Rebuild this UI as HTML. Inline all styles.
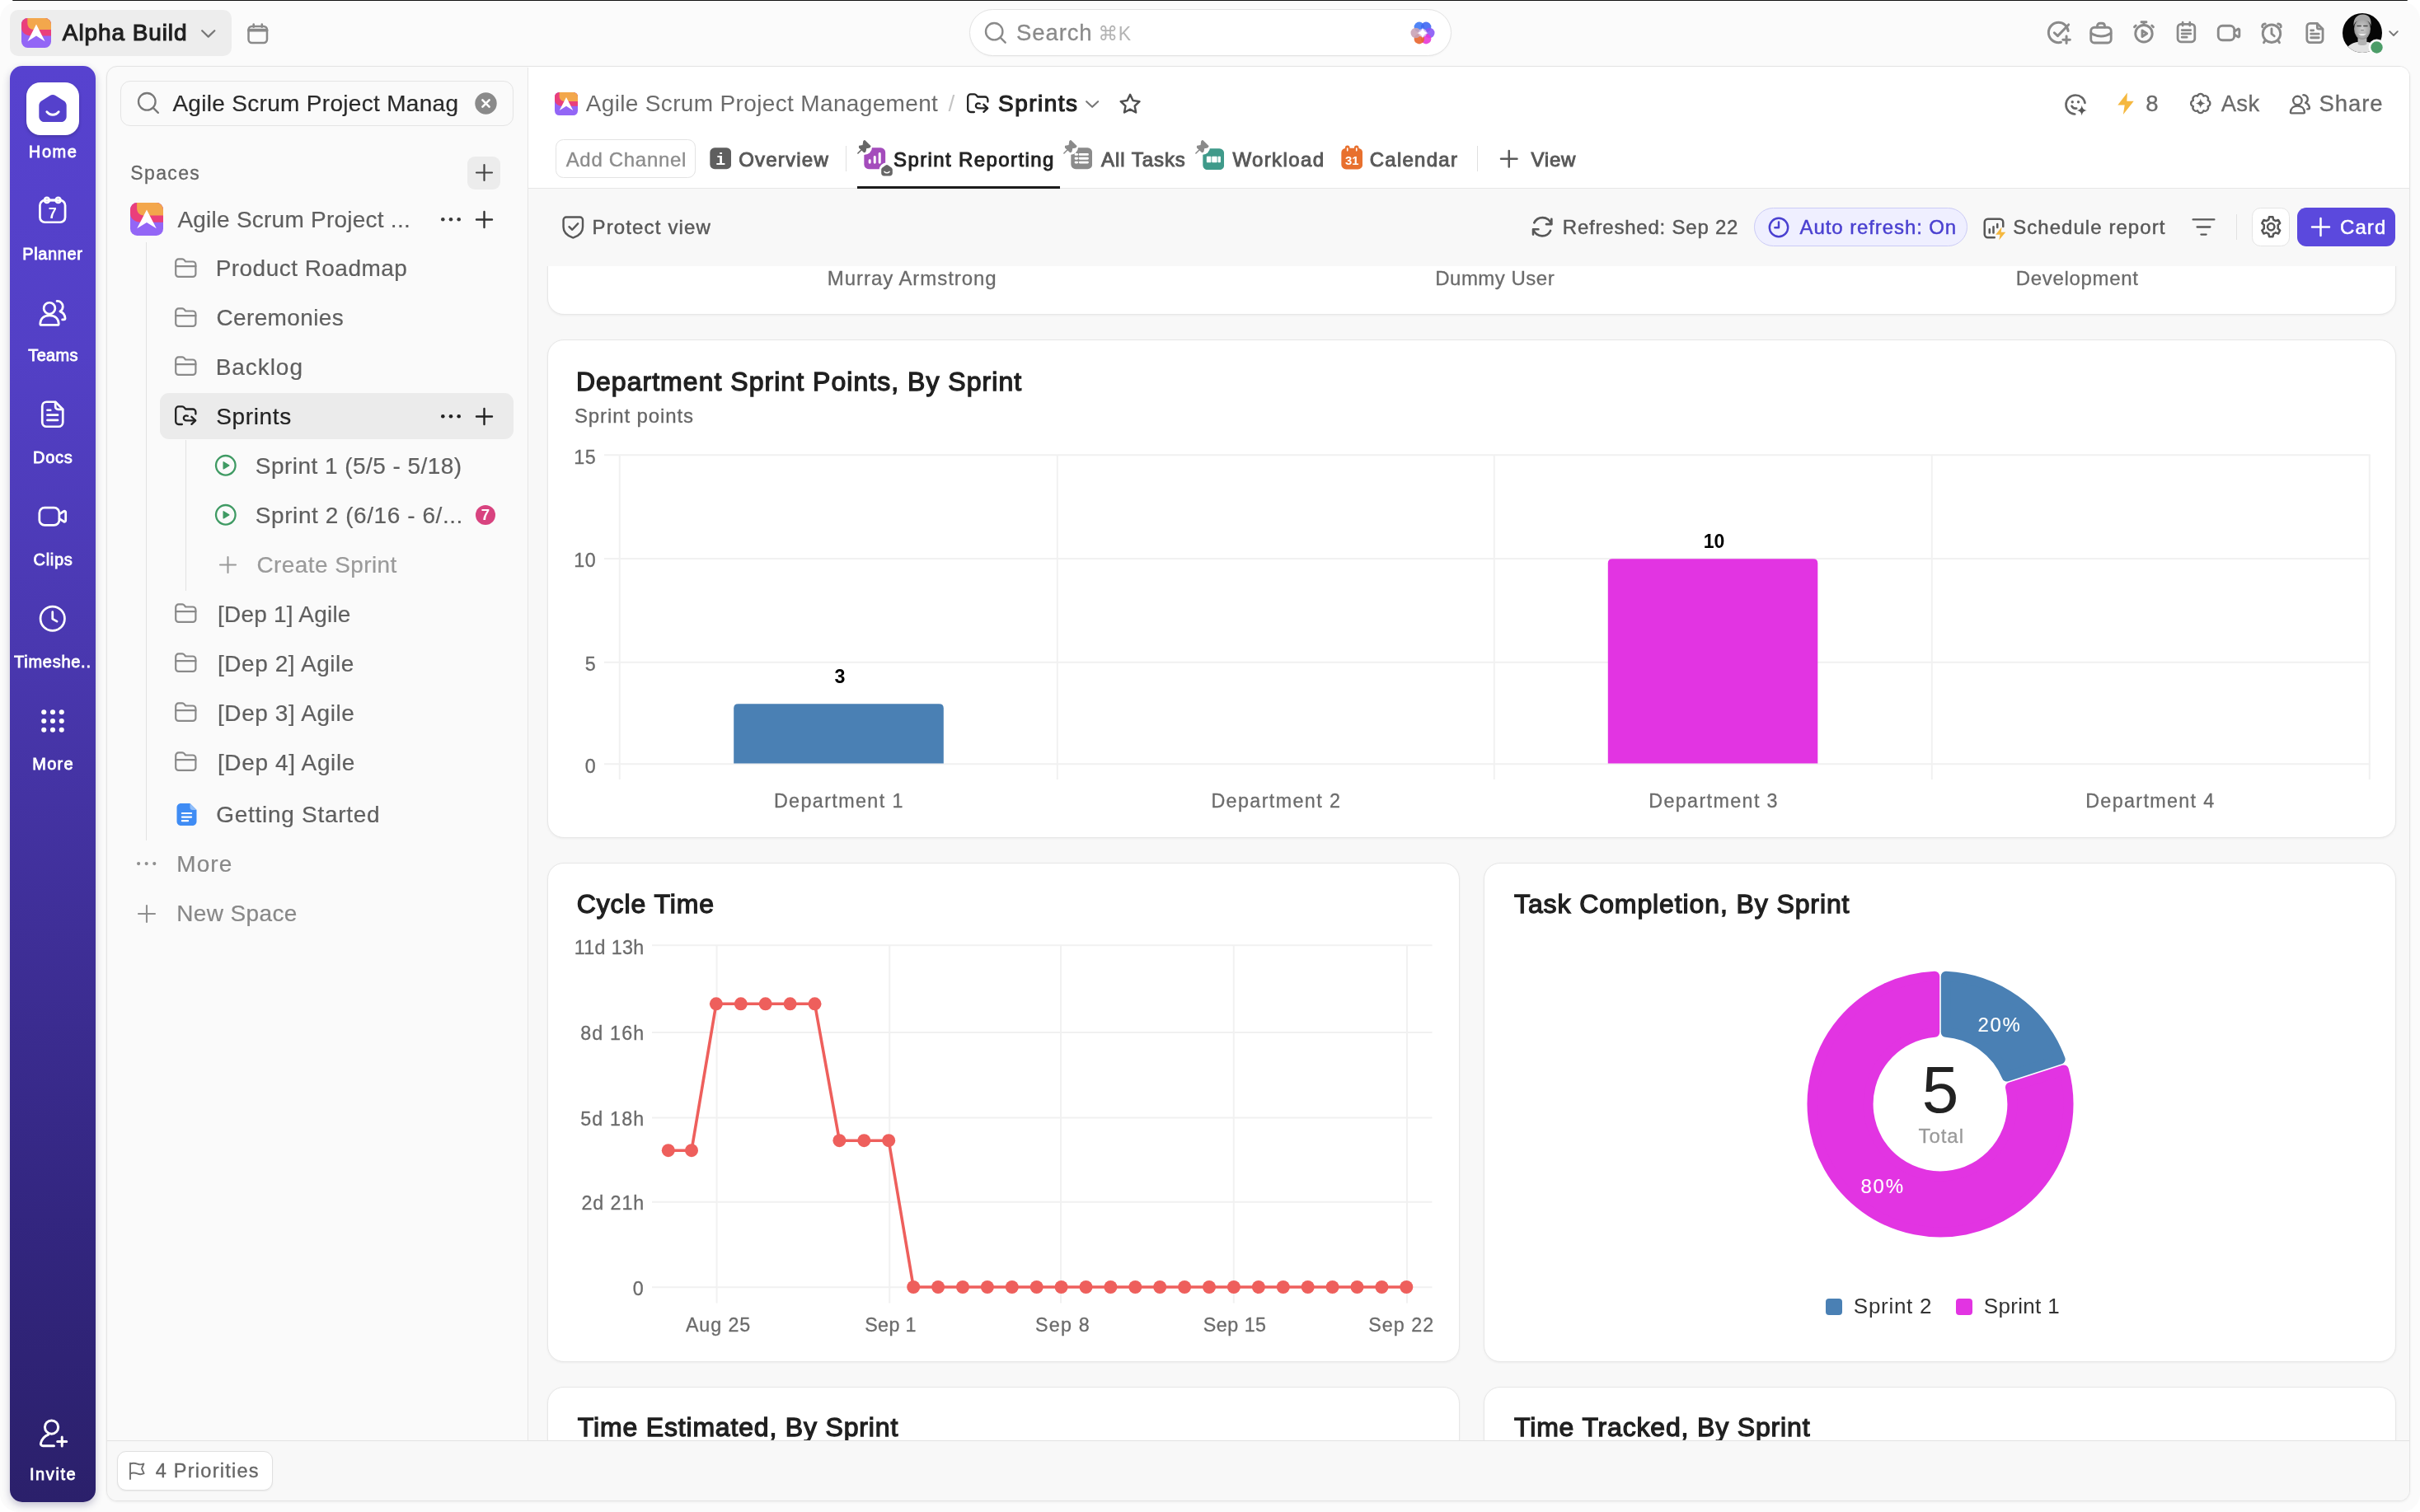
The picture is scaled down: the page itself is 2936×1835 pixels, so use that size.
<!DOCTYPE html>
<html lang="en"><head><meta charset="utf-8"><title>Sprints - Sprint Reporting</title><style>html,body{margin:0;padding:0;overflow:hidden}
body{width:2936px;height:1835px;position:relative;overflow:hidden;background:#fff;font-family:"Liberation Sans",sans-serif;}
#app{position:absolute;left:0;top:0;width:2936px;height:1835px;overflow:hidden;will-change:transform;}
.t{position:absolute;white-space:nowrap;line-height:1;}
.b{position:absolute;display:block;}
</style></head><body>
<div id="app">
<div class="b" style="left:0.00px;top:2.00px;width:2936.00px;height:1833.00px;background:#fbfbfb;border-radius:22px;"></div>
<div class="b" style="left:15.00px;top:0.00px;width:2906.00px;height:1.10px;background:#111;border-radius:0 0 1px 1px;"></div>
<div class="b" style="left:12.00px;top:12.00px;width:268.50px;height:55.50px;background:#ededed;border-radius:10px;"></div>
<svg class="b" style="left:26.00px;top:22.00px;" width="36.00" height="36.00" viewBox="0 0 36 36" fill="none"><defs><clipPath id="lg1"><rect x="0" y="0" width="36" height="36" rx="7.5"/></clipPath></defs>
<g clip-path="url(#lg1)"><rect width="36" height="36" fill="#9366f6"/>
<path d="M0 0H36V21.4H12C5 21.4 0 17.5 0 11.5Z" fill="#ea3f7b"/>
<path d="M7.3 0H36V14H15.5C10.5 14 7.3 11 7.3 6Z" fill="#f3a74c"/>
<path d="M18 7.6L28.6 28.2L18 21.6L7.4 28.2Z" fill="#fff"/></g></svg>
<div class="t" style="left:75.86px;top:26.30px;font-size:28px;color:#1f1f1f;letter-spacing:0.902px;-webkit-text-stroke:1.12px #1f1f1f;">Alpha Build</div>
<svg class="b" style="left:244.00px;top:36.00px;" width="17.50" height="9.80" viewBox="0 0 17.5 9.8" fill="none"><path d="M1.2 1.2L8.75 8.60L16.30 1.2" stroke="#777" stroke-width="2.2" stroke-linecap="round" stroke-linejoin="round"/></svg>
<svg class="b" style="left:299.00px;top:26.50px;" width="27.50" height="27.50" viewBox="0 0 24 24" fill="none"><g stroke="#8a8a8a" stroke-width="2.2" stroke-linecap="round" stroke-linejoin="round" fill="none"><rect x="2.2" y="4.4" width="19.6" height="17.4" rx="3.6"/><path d="M2.6 8.4H21.4" stroke-width="3.4"/><path d="M7.6 2.2V5M16.4 2.2V5"/></g></svg>
<div class="b" style="left:1175.50px;top:11.00px;width:585.00px;height:57.00px;background:#fff;border-radius:28.5px;border:1.5px solid #e3e3e3;box-sizing:border-box;box-shadow:0 1px 2px rgba(0,0,0,.04);"></div>
<svg class="b" style="left:1193.80px;top:26.20px;" width="34.40" height="34.40" viewBox="0 0 34.4 34.4" fill="none"><circle cx="12.2" cy="12.2" r="10.2" stroke="#8a8a8a" stroke-width="2.4"/><path d="M19.71 19.71L25.71 25.71" stroke="#8a8a8a" stroke-width="2.4" stroke-linecap="round"/></svg>
<div class="t" style="left:1233.11px;top:26.22px;font-size:27.5px;color:#8a8a8a;letter-spacing:0.870px;-webkit-text-stroke:0.3px #8a8a8a;">Search</div>
<div class="t" style="left:1332.2px;top:29.13px;font-size:23px;color:#b4b4b4;"><span style="font-family:'DejaVu Sans','Liberation Sans',sans-serif;font-size:24px;letter-spacing:0.6px;">⌘</span>K</div>
<svg class="b" style="left:1710.80px;top:24.60px;" width="30.00" height="30.00" viewBox="0 0 30 30" fill="none"><circle cx="10.85" cy="7.81" r="6.2" fill="#3d78f5" fill-opacity="0.9"/><circle cx="19.15" cy="7.81" r="6.2" fill="#4068f2" fill-opacity="0.9"/><circle cx="23.30" cy="15.00" r="6.2" fill="#8758f5" fill-opacity="0.9"/><circle cx="19.15" cy="22.19" r="6.2" fill="#e53ad6" fill-opacity="0.9"/><circle cx="10.85" cy="22.19" r="6.2" fill="#e8652e" fill-opacity="0.9"/><circle cx="6.70" cy="15.00" r="6.2" fill="#c9a3b6" fill-opacity="0.9"/><circle cx="15" cy="15" r="5" fill="#d9c4f2" fill-opacity="0.9"/><path d="M15 8.2C15.9 12.4 17.6 14.1 21.8 15C17.6 15.9 15.9 17.6 15 21.8C14.1 17.6 12.4 15.9 8.2 15C12.4 14.1 14.1 12.4 15 8.2Z" fill="#fff"/></svg>
<svg class="b" style="left:2482.49px;top:24.48px;" width="31.03" height="31.03" viewBox="0 0 24 24" fill="none"><g stroke="#8a8a8a" stroke-width="2.3" stroke-linecap="round" stroke-linejoin="round" fill="none"><path d="M21 10.5C20.3 5.8 16.5 2.6 12 2.6C6.8 2.6 2.6 6.8 2.6 12S6.8 21.4 12 21.4C12.8 21.4 13.6 21.3 14.3 21.1"/><path d="M8 12.2L11.2 15.2L21.4 4.6"/><path d="M19.4 15.4V22M16.1 18.7H22.7"/></g></svg>
<svg class="b" style="left:2533.52px;top:25.02px;" width="29.96" height="29.96" viewBox="0 0 24 24" fill="none"><g stroke="#8a8a8a" stroke-width="2.3" stroke-linecap="round" stroke-linejoin="round" fill="none"><rect x="2.2" y="6.6" width="19.6" height="15" rx="3.4"/><path d="M8.4 6.4V5.2C8.4 3.7 9.5 2.6 11 2.6H13C14.5 2.6 15.6 3.7 15.6 5.2V6.4"/><path d="M2.4 12.2C5.4 14.2 8.6 15.2 12 15.2S18.6 14.2 21.6 12.2"/></g></svg>
<svg class="b" style="left:2585.52px;top:24.02px;" width="29.96" height="29.96" viewBox="0 0 24 24" fill="none"><g stroke="#8a8a8a" stroke-width="2.3" stroke-linecap="round" stroke-linejoin="round" fill="none"><circle cx="12" cy="13.4" r="8.2"/><path d="M9.6 2.2H14.4M12 2.4V5"/><path d="M4.2 5.6L2.8 7M19.8 5.6L21.2 7"/><path d="M10.4 10.4L15 13.4L10.4 16.4Z"/></g></svg>
<svg class="b" style="left:2637.55px;top:24.02px;" width="28.89" height="29.96" viewBox="0 0 24 24" fill="none"><g stroke="#8a8a8a" stroke-width="2.3" stroke-linecap="round" stroke-linejoin="round" fill="none"><rect x="3.4" y="4" width="17.2" height="17.8" rx="3.2"/><path d="M8.4 2.2V5.4M15.6 2.2V5.4"/><path d="M7.6 10H16.4M7.6 13.6H16.4M7.6 17.2H12.6"/></g></svg>
<svg class="b" style="left:2689.22px;top:25.02px;" width="29.96" height="29.96" viewBox="0 0 24 24" fill="none"><g stroke="#8a8a8a" stroke-width="2.3" stroke-linecap="round" stroke-linejoin="round" fill="none"><rect x="1.8" y="5" width="15.6" height="14" rx="4"/><path d="M17.6 10.4L21 8.2C21.6 7.8 22.3 8.2 22.3 8.9V15.1C22.3 15.8 21.6 16.2 21 15.8L17.6 13.6"/></g></svg>
<svg class="b" style="left:2741.02px;top:25.02px;" width="29.96" height="29.96" viewBox="0 0 24 24" fill="none"><g stroke="#8a8a8a" stroke-width="2.3" stroke-linecap="round" stroke-linejoin="round" fill="none"><circle cx="12" cy="12.6" r="8.6"/><path d="M12 8V12.8L14.6 15"/><path d="M3 6.2C2.6 4.6 3.9 3 5.8 3.2M21 6.2C21.4 4.6 20.1 3 18.2 3.2"/><path d="M5.6 19.4L4.4 21.4M18.4 19.4L19.6 21.4"/></g></svg>
<svg class="b" style="left:2793.55px;top:25.02px;" width="28.89" height="29.96" viewBox="0 0 24 24" fill="none"><g stroke="#8a8a8a" stroke-width="2.3" stroke-linecap="round" stroke-linejoin="round" fill="none"><path d="M14.4 2.4H7.2C5.4 2.4 4 3.8 4 5.6V18.4C4 20.2 5.4 21.6 7.2 21.6H16.8C18.6 21.6 20 20.2 20 18.4V8Z"/><path d="M14.4 2.6V6.4C14.4 7.3 15.1 8 16 8H19.8"/><path d="M8 13H16M8 16.8H16M8 9.4H10.6"/></g></svg>
<svg class="b" style="left:2842.00px;top:16.00px;" width="48.00" height="48.00" viewBox="0 0 48 48" fill="none"><defs><clipPath id="avc"><circle cx="24" cy="24" r="24"/></clipPath>
<radialGradient id="avf" cx="0.5" cy="0.5" r="0.62"><stop offset="0" stop-color="#cfcfcf"/><stop offset="0.65" stop-color="#a9a9a9"/><stop offset="1" stop-color="#6e6e6e"/></radialGradient></defs>
<g clip-path="url(#avc)"><rect width="48" height="48" fill="#060606"/>
<path d="M3 48C5 38.5 13 34.5 24 34.5S43 38.5 45 48Z" fill="#e2e2e2"/>
<path d="M18.6 29H29.4V37.5C27 39.6 21 39.6 18.6 37.5Z" fill="#b4b4b4"/>
<ellipse cx="24" cy="19" rx="10" ry="13" fill="url(#avf)"/>
<path d="M13.6 15.4C12.8 7 17.4 1.6 24.6 1.6C31.8 1.6 35.6 6.6 34.4 15.4C33.4 10.8 30.6 8.2 24 8.2S14.8 10.8 13.6 15.4Z" fill="#a6a6a6"/>
<path d="M19 24.4C21.4 27.8 26.6 27.8 29 24.4C26.2 25.6 21.8 25.6 19 24.4Z" fill="#f6f6f6"/>
<path d="M18 15.6H22.2M25.8 15.6H30" stroke="#4a4a4a" stroke-width="1.5" stroke-linecap="round"/>
<path d="M22.6 20.6H25.4" stroke="#8a8a8a" stroke-width="1.2" stroke-linecap="round"/></g></svg>
<svg class="b" style="left:2872.50px;top:46.50px;" width="21.00" height="21.00" viewBox="0 0 21 21" fill="none"><circle cx="10.5" cy="10.5" r="10" fill="#fbfbfb"/><circle cx="10.5" cy="10.5" r="7.2" fill="#4c9d68"/></svg>
<svg class="b" style="left:2898.00px;top:37.30px;" width="12.00" height="7.20" viewBox="0 0 12 7.2" fill="none"><path d="M1.2 1.2L6.00 6.00L10.80 1.2" stroke="#777" stroke-width="1.9" stroke-linecap="round" stroke-linejoin="round"/></svg>
<div class="b" style="left:12.00px;top:80.00px;width:104.00px;height:1743.00px;border-radius:15px;background:linear-gradient(180deg,#5742cf 0%,#5340c6 20%,#4a38b0 40%,#3f2f98 60%,#332680 80%,#2b206b 100%);box-shadow:0 4px 10px rgba(40,30,90,.25);"></div>
<div class="b" style="left:32.00px;top:100.00px;width:64.00px;height:64.00px;background:#fff;border-radius:17px;box-shadow:0 2px 4px rgba(0,0,0,.18);"></div>
<svg class="b" style="left:45.00px;top:112.00px;" width="38.00" height="38.00" viewBox="0 0 36 36" fill="none"><path d="M18 2.8C19.2 2.8 20.2 3.1 21.2 3.8L30.6 9.6C32.6 10.8 33.8 12.8 33.8 15V27.6C33.8 31.2 31 34.2 27.2 34.2H8.8C5 34.2 2.2 31.2 2.2 27.6V15C2.2 12.8 3.4 10.8 5.4 9.6L14.8 3.8C15.8 3.1 16.8 2.8 18 2.8Z" fill="#5541cc"/><path d="M11.2 22.4C14.6 27 21.4 27 24.8 22.4" stroke="#fff" stroke-width="2.7" stroke-linecap="round"/></svg>
<div class="t" style="left:34.85px;top:174.07px;font-size:20px;color:#fff;letter-spacing:1.600px;-webkit-text-stroke:0.8px #fff;">Home</div>
<div class="t" style="left:27.35px;top:298.07px;font-size:20px;color:#fff;letter-spacing:0.608px;-webkit-text-stroke:0.8px #fff;">Planner</div>
<div class="t" style="left:34.30px;top:421.07px;font-size:20px;color:#fff;letter-spacing:0.350px;-webkit-text-stroke:0.8px #fff;">Teams</div>
<div class="t" style="left:40.00px;top:545.07px;font-size:20px;color:#fff;letter-spacing:0.717px;-webkit-text-stroke:0.8px #fff;">Docs</div>
<div class="t" style="left:40.60px;top:669.37px;font-size:20px;color:#fff;letter-spacing:0.663px;-webkit-text-stroke:0.8px #fff;">Clips</div>
<div class="t" style="left:17.05px;top:793.07px;font-size:20px;color:#fff;letter-spacing:0.731px;-webkit-text-stroke:0.8px #fff;">Timeshe..</div>
<div class="t" style="left:39.35px;top:916.57px;font-size:20px;color:#fff;letter-spacing:1.200px;-webkit-text-stroke:0.8px #fff;">More</div>
<div class="t" style="left:35.90px;top:1779.27px;font-size:20px;color:#fff;letter-spacing:1.610px;-webkit-text-stroke:0.8px #fff;">Invite</div>
<svg class="b" style="left:45.25px;top:236.25px;" width="37.50" height="37.50" viewBox="0 0 24 24" fill="none"><g stroke="#fff" stroke-width="1.75" stroke-linecap="round" stroke-linejoin="round" fill="none"><rect x="2.2" y="4.6" width="19.6" height="17" rx="3.8"/><circle cx="7.6" cy="4.4" r="1.9"/><circle cx="16.4" cy="4.4" r="1.9"/><path d="M9.5 4.4H14.5"/></g><text x="12" y="18.3" text-anchor="middle" font-family="Liberation Sans, sans-serif" font-weight="700" font-size="11.5" fill="#fff">7</text></svg>
<svg class="b" style="left:45.25px;top:361.25px;" width="37.50" height="37.50" viewBox="0 0 24 24" fill="none"><g stroke="#fff" stroke-width="1.75" stroke-linecap="round" stroke-linejoin="round" fill="none"><circle cx="9.6" cy="8.4" r="4.4"/><path d="M2.4 20.4C2.6 16.2 5.6 14 9.6 14S16.6 16.2 16.8 20.4C16.8 21 16.4 21.4 15.8 21.4H3.4C2.8 21.4 2.4 21 2.4 20.4Z"/><path d="M15.4 2.8C18 2.6 20 4.6 20 7C20 8.6 19.2 10 17.8 10.8C20 11.6 21.6 13.4 21.8 16.2C21.8 16.8 21.4 17.2 20.8 17.2H19.6"/></g></svg>
<svg class="b" style="left:45.25px;top:484.25px;" width="37.50" height="37.50" viewBox="0 0 24 24" fill="none"><g stroke="#fff" stroke-width="1.75" stroke-linecap="round" stroke-linejoin="round" fill="none"><path d="M14.2 2.4H7.4C5.5 2.4 4 3.9 4 5.8V18.2C4 20.1 5.5 21.6 7.4 21.6H16.6C18.5 21.6 20 20.1 20 18.2V8.2Z"/><path d="M14.2 2.6V6.2C14.2 7.3 15.1 8.2 16.2 8.2H19.8"/><path d="M8 12.6H16M8 16.6H16M8 8.8H10.4"/></g></svg>
<svg class="b" style="left:45.25px;top:608.25px;" width="37.50" height="37.50" viewBox="0 0 24 24" fill="none"><g stroke="#fff" stroke-width="1.75" stroke-linecap="round" stroke-linejoin="round" fill="none"><rect x="1.8" y="5.2" width="15.4" height="13.6" rx="4"/><path d="M17.4 10.2L20.8 8C21.4 7.6 22.2 8 22.2 8.8V15.2C22.2 16 21.4 16.4 20.8 16L17.4 13.8"/></g></svg>
<svg class="b" style="left:45.25px;top:732.25px;" width="37.50" height="37.50" viewBox="0 0 24 24" fill="none"><g stroke="#fff" stroke-width="1.75" stroke-linecap="round" stroke-linejoin="round" fill="none"><circle cx="12" cy="12" r="9.4"/><path d="M12 6.8V12.2L15.4 14.2"/></g></svg>
<svg class="b" style="left:50.20px;top:861.00px;" width="28.00" height="28.00" viewBox="0 0 27.6 27.6" fill="none"><circle cx="3.2" cy="3.2" r="3" fill="#fff"/><circle cx="3.2" cy="13.8" r="3" fill="#fff"/><circle cx="3.2" cy="24.4" r="3" fill="#fff"/><circle cx="13.8" cy="3.2" r="3" fill="#fff"/><circle cx="13.8" cy="13.8" r="3" fill="#fff"/><circle cx="13.8" cy="24.4" r="3" fill="#fff"/><circle cx="24.4" cy="3.2" r="3" fill="#fff"/><circle cx="24.4" cy="13.8" r="3" fill="#fff"/><circle cx="24.4" cy="24.4" r="3" fill="#fff"/></svg>
<svg class="b" style="left:44.50px;top:1720.00px;" width="39.00" height="39.00" viewBox="0 0 24 24" fill="none"><g stroke="#fff" stroke-width="1.85" stroke-linecap="round" stroke-linejoin="round" fill="none"><circle cx="10.8" cy="7.4" r="5"/><path d="M12.6 21.4H4.4C3.2 21.4 2.4 20.4 2.8 19.2C3.6 16.4 5.4 14.2 8.4 13"/><path d="M18.6 14.8V21.6M15.2 18.2H22"/></g></svg>
<div class="b" style="left:128.70px;top:80.00px;width:2795.00px;height:1742.40px;background:#fafafa;border-radius:13px;border:1px solid #e4e4e4;box-sizing:border-box;box-shadow:0 1px 3px rgba(0,0,0,.06);overflow:hidden;"></div>
<div class="b" style="left:641.00px;top:81.00px;width:2281.70px;height:1666.50px;background:#f8f8f8;border-top-right-radius:12px;"></div>
<div class="b" style="left:641.00px;top:81.00px;width:2281.70px;height:147.70px;background:#fff;border-top-right-radius:12px;border-bottom:1px solid #e6e6e6;box-sizing:border-box;"></div>
<div class="b" style="left:640.00px;top:81.50px;width:1.20px;height:1667.00px;background:#e6e6e6;"></div>
<div class="b" style="left:146.30px;top:98.40px;width:476.40px;height:54.60px;background:#fafafa;border-radius:12px;border:1.8px solid #e4e4e4;box-sizing:border-box;"></div>
<svg class="b" style="left:165.70px;top:111.20px;" width="34.60" height="34.60" viewBox="0 0 34.6 34.6" fill="none"><circle cx="12.3" cy="12.3" r="10.3" stroke="#787878" stroke-width="2.3"/><path d="M19.88 19.88L25.88 25.88" stroke="#787878" stroke-width="2.3" stroke-linecap="round"/></svg>
<div class="t" style="left:209.40px;top:112.10px;font-size:28px;color:#2a2a2a;letter-spacing:0.305px;-webkit-text-stroke:0.2px #2a2a2a;">Agile Scrum Project Manag</div>
<svg class="b" style="left:575.50px;top:112.00px;" width="27.00" height="27.00" viewBox="0 0 27 27" fill="none"><circle cx="13.5" cy="13.5" r="13.2" fill="#8a8a8a"/><path d="M9.4 9.4L17.6 17.6M17.6 9.4L9.4 17.6" stroke="#fff" stroke-width="2.6" stroke-linecap="round"/></svg>
<div class="t" style="left:158.31px;top:198.73px;font-size:23px;color:#666;letter-spacing:1.367px;-webkit-text-stroke:0.3px #666;">Spaces</div>
<div class="b" style="left:567.00px;top:189.50px;width:40.00px;height:40.00px;background:#ececec;border-radius:9px;"></div>
<svg class="b" style="left:575.50px;top:198.00px;" width="23.00" height="23.00" viewBox="0 0 23 23" fill="none"><path d="M11.5 2V21M2 11.5H21" stroke="#444" stroke-width="2.2" stroke-linecap="round"/></svg>
<svg class="b" style="left:158.00px;top:245.50px;" width="40.00" height="40.00" viewBox="0 0 36 36" fill="none"><defs><clipPath id="lg2"><rect x="0" y="0" width="36" height="36" rx="7.5"/></clipPath></defs>
<g clip-path="url(#lg2)"><rect width="36" height="36" fill="#9366f6"/>
<path d="M0 0H36V21.4H12C5 21.4 0 17.5 0 11.5Z" fill="#ea3f7b"/>
<path d="M7.3 0H36V14H15.5C10.5 14 7.3 11 7.3 6Z" fill="#f3a74c"/>
<path d="M18 7.6L28.6 28.2L18 21.6L7.4 28.2Z" fill="#fff"/></g></svg>
<div class="t" style="left:215.40px;top:252.50px;font-size:28px;color:#5f5f5f;letter-spacing:0.242px;-webkit-text-stroke:0.2px #5f5f5f;">Agile Scrum Project ...</div>
<svg class="b" style="left:534.30px;top:262.70px;" width="26.00" height="6.60" viewBox="0 0 26.0 6.6" fill="none"><circle cx="3.3" cy="3.3" r="2.3" fill="#3a3a3a"/><circle cx="13.0" cy="3.3" r="2.3" fill="#3a3a3a"/><circle cx="22.7" cy="3.3" r="2.3" fill="#3a3a3a"/></svg>
<svg class="b" style="left:575.50px;top:254.50px;" width="23.00" height="23.00" viewBox="0 0 23 23" fill="none"><path d="M11.5 2V21M2 11.5H21" stroke="#333" stroke-width="2.4" stroke-linecap="round"/></svg>
<div class="b" style="left:177.00px;top:293.50px;width:1.30px;height:726.00px;background:#e2e2e2;"></div>
<div class="b" style="left:225.00px;top:534.00px;width:1.30px;height:183.00px;background:#e2e2e2;"></div>
<div class="b" style="left:193.80px;top:477.40px;width:429.30px;height:55.60px;background:#ebebeb;border-radius:11px;"></div>
<svg class="b" style="left:211.30px;top:311.80px;" width="28.60" height="26.40" viewBox="0 0 26 24" fill="none"><g stroke="#8a8a8a" stroke-width="2.0" stroke-linecap="round" stroke-linejoin="round" fill="none"><path d="M2 5.5C2 3.6 3.4 2.2 5.2 2.2H9.2C10.1 2.2 10.9 2.6 11.5 3.3L12.8 5H20.8C22.6 5 24 6.4 24 8.2V18.6C24 20.4 22.6 21.8 20.8 21.8H5.2C3.4 21.8 2 20.4 2 18.6Z"/><path d="M2 10.2H24"/></g></svg>
<div class="t" style="left:261.66px;top:312.20px;font-size:28px;color:#5f5f5f;letter-spacing:0.463px;-webkit-text-stroke:0.2px #5f5f5f;">Product Roadmap</div>
<svg class="b" style="left:211.30px;top:371.50px;" width="28.60" height="26.40" viewBox="0 0 26 24" fill="none"><g stroke="#8a8a8a" stroke-width="2.0" stroke-linecap="round" stroke-linejoin="round" fill="none"><path d="M2 5.5C2 3.6 3.4 2.2 5.2 2.2H9.2C10.1 2.2 10.9 2.6 11.5 3.3L12.8 5H20.8C22.6 5 24 6.4 24 8.2V18.6C24 20.4 22.6 21.8 20.8 21.8H5.2C3.4 21.8 2 20.4 2 18.6Z"/><path d="M2 10.2H24"/></g></svg>
<div class="t" style="left:262.50px;top:371.90px;font-size:28px;color:#5f5f5f;letter-spacing:0.354px;-webkit-text-stroke:0.2px #5f5f5f;">Ceremonies</div>
<svg class="b" style="left:211.30px;top:431.40px;" width="28.60" height="26.40" viewBox="0 0 26 24" fill="none"><g stroke="#8a8a8a" stroke-width="2.0" stroke-linecap="round" stroke-linejoin="round" fill="none"><path d="M2 5.5C2 3.6 3.4 2.2 5.2 2.2H9.2C10.1 2.2 10.9 2.6 11.5 3.3L12.8 5H20.8C22.6 5 24 6.4 24 8.2V18.6C24 20.4 22.6 21.8 20.8 21.8H5.2C3.4 21.8 2 20.4 2 18.6Z"/><path d="M2 10.2H24"/></g></svg>
<div class="t" style="left:261.66px;top:431.80px;font-size:28px;color:#5f5f5f;letter-spacing:0.947px;-webkit-text-stroke:0.2px #5f5f5f;">Backlog</div>
<svg class="b" style="left:211.30px;top:731.20px;" width="28.60" height="26.40" viewBox="0 0 26 24" fill="none"><g stroke="#8a8a8a" stroke-width="2.0" stroke-linecap="round" stroke-linejoin="round" fill="none"><path d="M2 5.5C2 3.6 3.4 2.2 5.2 2.2H9.2C10.1 2.2 10.9 2.6 11.5 3.3L12.8 5H20.8C22.6 5 24 6.4 24 8.2V18.6C24 20.4 22.6 21.8 20.8 21.8H5.2C3.4 21.8 2 20.4 2 18.6Z"/><path d="M2 10.2H24"/></g></svg>
<div class="t" style="left:263.94px;top:731.60px;font-size:28px;color:#5f5f5f;letter-spacing:0.224px;-webkit-text-stroke:0.2px #5f5f5f;">[Dep 1] Agile</div>
<svg class="b" style="left:211.30px;top:791.20px;" width="28.60" height="26.40" viewBox="0 0 26 24" fill="none"><g stroke="#8a8a8a" stroke-width="2.0" stroke-linecap="round" stroke-linejoin="round" fill="none"><path d="M2 5.5C2 3.6 3.4 2.2 5.2 2.2H9.2C10.1 2.2 10.9 2.6 11.5 3.3L12.8 5H20.8C22.6 5 24 6.4 24 8.2V18.6C24 20.4 22.6 21.8 20.8 21.8H5.2C3.4 21.8 2 20.4 2 18.6Z"/><path d="M2 10.2H24"/></g></svg>
<div class="t" style="left:263.94px;top:791.60px;font-size:28px;color:#5f5f5f;letter-spacing:0.557px;-webkit-text-stroke:0.2px #5f5f5f;">[Dep 2] Agile</div>
<svg class="b" style="left:211.30px;top:851.20px;" width="28.60" height="26.40" viewBox="0 0 26 24" fill="none"><g stroke="#8a8a8a" stroke-width="2.0" stroke-linecap="round" stroke-linejoin="round" fill="none"><path d="M2 5.5C2 3.6 3.4 2.2 5.2 2.2H9.2C10.1 2.2 10.9 2.6 11.5 3.3L12.8 5H20.8C22.6 5 24 6.4 24 8.2V18.6C24 20.4 22.6 21.8 20.8 21.8H5.2C3.4 21.8 2 20.4 2 18.6Z"/><path d="M2 10.2H24"/></g></svg>
<div class="t" style="left:263.94px;top:851.60px;font-size:28px;color:#5f5f5f;letter-spacing:0.599px;-webkit-text-stroke:0.2px #5f5f5f;">[Dep 3] Agile</div>
<svg class="b" style="left:211.30px;top:911.20px;" width="28.60" height="26.40" viewBox="0 0 26 24" fill="none"><g stroke="#8a8a8a" stroke-width="2.0" stroke-linecap="round" stroke-linejoin="round" fill="none"><path d="M2 5.5C2 3.6 3.4 2.2 5.2 2.2H9.2C10.1 2.2 10.9 2.6 11.5 3.3L12.8 5H20.8C22.6 5 24 6.4 24 8.2V18.6C24 20.4 22.6 21.8 20.8 21.8H5.2C3.4 21.8 2 20.4 2 18.6Z"/><path d="M2 10.2H24"/></g></svg>
<div class="t" style="left:263.94px;top:911.60px;font-size:28px;color:#5f5f5f;letter-spacing:0.641px;-webkit-text-stroke:0.2px #5f5f5f;">[Dep 4] Agile</div>
<svg class="b" style="left:211.30px;top:491.40px;" width="28.60" height="26.40" viewBox="0 0 26 24" fill="none"><g stroke="#222" stroke-width="2.1" stroke-linecap="round" stroke-linejoin="round" fill="none"><path d="M9 21.8H5.2C3.4 21.8 2 20.4 2 18.6V5.5C2 3.6 3.4 2.2 5.2 2.2H9.2C10.1 2.2 10.9 2.6 11.5 3.3L12.8 5H20.8C22.6 5 24 6.4 24 8.2V10.5"/><path d="M19.5 13.5L23.8 17.6L19.5 21.7"/><path d="M23.5 17.6H14.2C11.6 17.6 10.4 15.9 10.9 14.2C11.4 12.4 13.4 11.6 15.2 12.6"/></g></svg>
<div class="t" style="left:262.24px;top:491.60px;font-size:28px;color:#222;letter-spacing:0.648px;-webkit-text-stroke:0.2px #222;">Sprints</div>
<svg class="b" style="left:534.30px;top:501.90px;" width="26.00" height="6.60" viewBox="0 0 26.0 6.6" fill="none"><circle cx="3.3" cy="3.3" r="2.3" fill="#222"/><circle cx="13.0" cy="3.3" r="2.3" fill="#222"/><circle cx="22.7" cy="3.3" r="2.3" fill="#222"/></svg>
<svg class="b" style="left:575.50px;top:493.70px;" width="23.00" height="23.00" viewBox="0 0 23 23" fill="none"><path d="M11.5 2V21M2 11.5H21" stroke="#222" stroke-width="2.4" stroke-linecap="round"/></svg>
<svg class="b" style="left:259.70px;top:551.20px;" width="27.60" height="27.60" viewBox="0 0 27.6 27.6" fill="none"><circle cx="13.8" cy="13.8" r="11.8" stroke="#3f9a63" stroke-width="2.3"/><path d="M11.200000000000001 9.8L17.8 13.8L11.200000000000001 17.8Z" fill="#3f9a63" stroke="#3f9a63" stroke-width="1.4" stroke-linejoin="round"/></svg>
<div class="t" style="left:309.84px;top:551.60px;font-size:28px;color:#5f5f5f;letter-spacing:0.451px;-webkit-text-stroke:0.2px #5f5f5f;">Sprint 1 (5/5 - 5/18)</div>
<svg class="b" style="left:259.70px;top:611.20px;" width="27.60" height="27.60" viewBox="0 0 27.6 27.6" fill="none"><circle cx="13.8" cy="13.8" r="11.8" stroke="#3f9a63" stroke-width="2.3"/><path d="M11.200000000000001 9.8L17.8 13.8L11.200000000000001 17.8Z" fill="#3f9a63" stroke="#3f9a63" stroke-width="1.4" stroke-linejoin="round"/></svg>
<div class="t" style="left:309.84px;top:611.60px;font-size:28px;color:#5f5f5f;letter-spacing:0.567px;-webkit-text-stroke:0.2px #5f5f5f;">Sprint 2 (6/16 - 6/...</div>
<div class="b" style="left:577.00px;top:613.00px;width:24.00px;height:24.00px;background:#d8437f;border-radius:12px;"></div>
<div class="t" style="left:583.87px;top:615.94px;font-size:18.5px;color:#fff;font-weight:700;">7</div>
<svg class="b" style="left:264.50px;top:674.00px;" width="23.00" height="23.00" viewBox="0 0 23 23" fill="none"><path d="M11.5 2V21M2 11.5H21" stroke="#9a9a9a" stroke-width="2.1" stroke-linecap="round"/></svg>
<div class="t" style="left:311.50px;top:671.60px;font-size:28px;color:#9a9a9a;letter-spacing:0.404px;-webkit-text-stroke:0.2px #9a9a9a;">Create Sprint</div>
<svg class="b" style="left:213.50px;top:975.00px;" width="25.00" height="27.00" viewBox="0 0 24 27" fill="none"><path d="M0 5C0 2.2 2.2 0 5 0H16L24 8V22C24 24.8 21.8 27 19 27H5C2.2 27 0 24.8 0 22Z" fill="#3f8cf4"/><path d="M16 0V5C16 6.7 17.3 8 19 8H24Z" fill="#8fbdf9"/><path d="M6.4 12H17.6M6.4 16.6H17.6M6.4 21.2H13.6" stroke="#fff" stroke-width="2.2" stroke-linecap="round"/></svg>
<div class="t" style="left:262.20px;top:975.30px;font-size:28px;color:#5f5f5f;letter-spacing:0.725px;-webkit-text-stroke:0.2px #5f5f5f;">Getting Started</div>
<svg class="b" style="left:164.80px;top:1045.40px;" width="25.40" height="6.20" viewBox="0 0 25.4 6.2" fill="none"><circle cx="3.1" cy="3.1" r="2.1" fill="#8f8f8f"/><circle cx="12.7" cy="3.1" r="2.1" fill="#8f8f8f"/><circle cx="22.3" cy="3.1" r="2.1" fill="#8f8f8f"/></svg>
<div class="t" style="left:214.16px;top:1034.90px;font-size:28px;color:#888;letter-spacing:1.153px;-webkit-text-stroke:0.2px #888;">More</div>
<svg class="b" style="left:165.50px;top:1096.50px;" width="24.00" height="24.00" viewBox="0 0 24 24" fill="none"><path d="M12.0 2V22M2 12.0H22" stroke="#8f8f8f" stroke-width="2.1" stroke-linecap="round"/></svg>
<div class="t" style="left:214.16px;top:1094.90px;font-size:28px;color:#888;letter-spacing:0.385px;-webkit-text-stroke:0.2px #888;">New Space</div>
<div class="b" style="left:130.00px;top:1747.80px;width:2793.00px;height:1.40px;background:#e2e2e2;"></div>
<div class="b" style="left:130.00px;top:1749.20px;width:2793.00px;height:72.20px;background:#f8f8f8;border-radius:0 0 12px 12px;"></div>
<div class="b" style="left:141.80px;top:1761.20px;width:189.60px;height:48.20px;background:#fff;border-radius:11px;border:1.6px solid #e0e0e0;box-sizing:border-box;box-shadow:0 1px 2px rgba(0,0,0,.06);"></div>
<svg class="b" style="left:154.50px;top:1773.00px;" width="22.00" height="24.00" viewBox="0 0 22 24" fill="none"><g stroke="#707070" stroke-width="1.9" stroke-linecap="round" stroke-linejoin="round" fill="none"><path d="M3 2.6V22"/><path d="M3 3.6C6 2.2 9 2.6 11.6 3.6C14 4.6 16.6 4.8 19.4 3.4L17 9.4L19.6 15.2C16.6 16.6 14 16.4 11.6 15.4C9 14.4 6 14 3 15.4"/></g></svg>
<div class="t" style="left:188.65px;top:1773.81px;font-size:23.5px;color:#666;letter-spacing:1.269px;-webkit-text-stroke:0.35px #666;">4 Priorities</div>
<svg class="b" style="left:673.00px;top:112.00px;" width="28.00" height="28.00" viewBox="0 0 36 36" fill="none"><defs><clipPath id="lg3"><rect x="0" y="0" width="36" height="36" rx="7"/></clipPath></defs>
<g clip-path="url(#lg3)"><rect width="36" height="36" fill="#9366f6"/>
<path d="M0 0H36V21.4H12C5 21.4 0 17.5 0 11.5Z" fill="#ea3f7b"/>
<path d="M7.3 0H36V14H15.5C10.5 14 7.3 11 7.3 6Z" fill="#f3a74c"/>
<path d="M18 7.6L28.6 28.2L18 21.6L7.4 28.2Z" fill="#fff"/></g></svg>
<div class="t" style="left:710.70px;top:112.10px;font-size:28px;color:#6b6b6b;letter-spacing:0.348px;">Agile Scrum Project Management</div>
<div class="t" style="left:1150.60px;top:112.10px;font-size:28px;color:#c4c4c4;">/</div>
<svg class="b" style="left:1171.90px;top:111.80px;" width="28.60" height="26.40" viewBox="0 0 26 24" fill="none"><g stroke="#222" stroke-width="2.1" stroke-linecap="round" stroke-linejoin="round" fill="none"><path d="M9 21.8H5.2C3.4 21.8 2 20.4 2 18.6V5.5C2 3.6 3.4 2.2 5.2 2.2H9.2C10.1 2.2 10.9 2.6 11.5 3.3L12.8 5H20.8C22.6 5 24 6.4 24 8.2V10.5"/><path d="M19.5 13.5L23.8 17.6L19.5 21.7"/><path d="M23.5 17.6H14.2C11.6 17.6 10.4 15.9 10.9 14.2C11.4 12.4 13.4 11.6 15.2 12.6"/></g></svg>
<div class="t" style="left:1211.00px;top:112.10px;font-size:28px;color:#222;letter-spacing:1.495px;-webkit-text-stroke:1.12px #222;">Sprints</div>
<svg class="b" style="left:1317.30px;top:122.40px;" width="16.30" height="9.00" viewBox="0 0 16.3 9" fill="none"><path d="M1.2 1.2L8.15 7.80L15.10 1.2" stroke="#777" stroke-width="2.1" stroke-linecap="round" stroke-linejoin="round"/></svg>
<svg class="b" style="left:1357.20px;top:111.60px;" width="28.20" height="28.20" viewBox="0 0 24 24" fill="none"><g stroke="#4f4f4f" stroke-width="2.1" stroke-linecap="round" stroke-linejoin="round" fill="none"><path d="M12.00 2.40L14.94 8.55L21.70 9.45L16.76 14.15L18.00 20.85L12.00 17.60L6.00 20.85L7.24 14.15L2.30 9.45L9.06 8.55Z"/></g></svg>
<svg class="b" style="left:2503.00px;top:111.50px;" width="30.00" height="30.00" viewBox="0 0 24 24" fill="none"><g stroke="#666" stroke-width="2.1" stroke-linecap="round" stroke-linejoin="round" fill="none"><path d="M21.2 10.4C20.6 6 16.8 2.8 12 2.8C6.9 2.8 2.8 6.9 2.8 12S6.9 21.2 11.4 21.2"/><path d="M8.4 13.4C9.4 15.2 11.2 16 13 15.6"/></g><circle cx="9" cy="9.4" r="1.35" fill="#666"/><circle cx="14.8" cy="9.4" r="1.35" fill="#666"/><path d="M18.2 12.6C18.9 16 19.8 16.9 23.2 17.6C19.8 18.3 18.9 19.2 18.2 22.6C17.5 19.2 16.6 18.3 13.2 17.6C16.6 16.9 17.5 16 18.2 12.6Z" fill="#555"/></svg>
<svg class="b" style="left:2567.50px;top:112.00px;" width="22.00" height="27.50" viewBox="0 0 21.4 27.4" fill="none"><path d="M12.6 0.6L1 15.4H9.4L7.6 26.8L20.4 10.8H12Z" fill="#f5b83f"/></svg>
<div class="t" style="left:2603.18px;top:112.02px;font-size:27.5px;color:#6a6a6a;-webkit-text-stroke:0.3px #6a6a6a;">8</div>
<svg class="b" style="left:2655.50px;top:112.00px;" width="27.50" height="27.50" viewBox="0 0 24 24" fill="none"><g stroke="#666" stroke-width="2.3" stroke-linecap="round" stroke-linejoin="round" fill="none"><path d="M12 2.4C13.8 2.4 15.2 3.6 15.6 5.2C17.1 4.4 18.9 4.6 20.1 5.9C21.4 7.1 21.6 8.9 20.8 10.4C22.4 10.8 23.6 12.2 23.6 14C23.6 15.8 22.4 17.2 20.8 17.6C21.6 19.1 21.4 20.9 20.1 22.1C18.9 23.4 17.1 23.6 15.6 22.8C15.2 24.4 13.8 25.6 12 25.6C10.2 25.6 8.8 24.4 8.4 22.8C6.9 23.6 5.1 23.4 3.9 22.1C2.6 20.9 2.4 19.1 3.2 17.6C1.6 17.2 0.4 15.8 0.4 14C0.4 12.2 1.6 10.8 3.2 10.4C2.4 8.9 2.6 7.1 3.9 5.9C5.1 4.6 6.9 4.4 8.4 5.2C8.8 3.6 10.2 2.4 12 2.4Z" transform="translate(1.5 -0.5) scale(0.875)"/></g><path d="M12 6.6C12.7 10.1 13.6 11 17.1 11.7C13.6 12.4 12.7 13.3 12 16.8C11.3 13.3 10.4 12.4 6.9 11.7C10.4 11 11.3 10.1 12 6.6Z" fill="#666"/></svg>
<div class="t" style="left:2694.65px;top:112.02px;font-size:27.5px;color:#6a6a6a;letter-spacing:0.388px;-webkit-text-stroke:0.3px #6a6a6a;">Ask</div>
<svg class="b" style="left:2776.00px;top:111.50px;" width="28.50" height="28.50" viewBox="0 0 24 24" fill="none"><g stroke="#666" stroke-width="2.0" stroke-linecap="round" stroke-linejoin="round" fill="none"><circle cx="9.6" cy="8.4" r="4.4"/><path d="M2.4 20.4C2.6 16.2 5.6 14 9.6 14S16.6 16.2 16.8 20.4C16.8 21 16.4 21.4 15.8 21.4H3.4C2.8 21.4 2.4 21 2.4 20.4Z"/><path d="M15.4 2.8C18 2.6 20 4.6 20 7C20 8.6 19.2 10 17.8 10.8C20 11.6 21.6 13.4 21.8 16.2C21.8 16.8 21.4 17.2 20.8 17.2H19.6"/></g></svg>
<div class="t" style="left:2813.41px;top:112.02px;font-size:27.5px;color:#6a6a6a;letter-spacing:0.938px;-webkit-text-stroke:0.3px #6a6a6a;">Share</div>
<div class="b" style="left:673.50px;top:169.30px;width:170.00px;height:46.80px;background:#fff;border-radius:9.5px;border:1.9px solid #e3e3e3;box-sizing:border-box;"></div>
<div class="t" style="left:686.67px;top:181.68px;font-size:24px;color:#8c8c8c;letter-spacing:0.693px;-webkit-text-stroke:0.35px #8c8c8c;">Add Channel</div>
<svg class="b" style="left:860.60px;top:179.40px;" width="26.50" height="26.50" viewBox="0 0 24 24" fill="none"><rect x="0.3" y="0.3" width="23.4" height="23.4" rx="5.2" fill="#5f5f5f"/><text x="12" y="19" text-anchor="middle" font-family="Liberation Mono, monospace" font-weight="700" font-size="18" fill="#fff">i</text></svg>
<div class="t" style="left:896.20px;top:181.68px;font-size:24px;color:#595959;letter-spacing:1.220px;-webkit-text-stroke:0.96px #595959;">Overview</div>
<div class="b" style="left:1026.00px;top:177.00px;width:1.30px;height:31.00px;background:#e0e0e0;"></div>
<svg class="b" style="left:1048.30px;top:179.40px;" width="26.50" height="26.50" viewBox="0 0 24 24" fill="none"><rect x="0.3" y="0.3" width="23.4" height="23.4" rx="5.2" fill="#a44cbc"/><path d="M6.5 14.2V16.6M12 10.4V16.6M17.4 6.8V16.6" stroke="#fff" stroke-width="2.7" stroke-linecap="round"/></svg>
<svg class="b" style="left:1037.50px;top:168.00px;overflow:visible;" width="20.60" height="20.60" viewBox="-2 -2 20.6 20.6" fill="none"><circle cx="8.2" cy="8.2" r="9.9" fill="#fff"/><path d="M9.1 0.6L16 7.4L14.9 9L10.75 9.8L9.9 13.9L8.3 14.7L2.5 9V7.4L7 6.5L7.9 1.2Z" fill="#666" stroke="#666" stroke-width="1.1" stroke-linejoin="round"/><path d="M4.7 12.2L0.9 16" stroke="#666" stroke-width="1.6" stroke-linecap="round"/></svg>
<svg class="b" style="left:1065.50px;top:197.00px;" width="20.00" height="20.00" viewBox="0 0 20 20" fill="none"><circle cx="10" cy="9.8" r="9.6" fill="#fff"/><path d="M10 2.9C10.5 2.9 11 3.1 11.4 3.4L15.2 6.2C16.2 6.9 16.8 8 16.8 9.2V13.2C16.8 15 15.4 16.4 13.6 16.4H6.4C4.6 16.4 3.2 15 3.2 13.2V9.2C3.2 8 3.8 6.9 4.8 6.2L8.6 3.4C9 3.1 9.5 2.9 10 2.9Z" fill="#666"/><path d="M7 11.4C8.6 13.1 11.4 13.1 13 11.4" stroke="#fff" stroke-width="1.5" stroke-linecap="round"/></svg>
<div class="t" style="left:1084.10px;top:181.68px;font-size:24px;color:#222;letter-spacing:1.381px;-webkit-text-stroke:0.96px #222;">Sprint Reporting</div>
<div class="b" style="left:1039.60px;top:225.60px;width:246.60px;height:3.70px;background:#1c1c1c;"></div>
<svg class="b" style="left:1298.80px;top:179.40px;" width="26.50" height="26.50" viewBox="0 0 24 24" fill="none"><rect x="0.3" y="0.3" width="23.4" height="23.4" rx="5.2" fill="#8b8b8b"/><path d="M5.4 7.6H7M10 7.6H18.6M5.4 12H7M10 12H18.6M5.4 16.4H7M10 16.4H18.6" stroke="#fff" stroke-width="2.5" stroke-linecap="round"/></svg>
<svg class="b" style="left:1288.40px;top:168.00px;overflow:visible;" width="20.60" height="20.60" viewBox="-2 -2 20.6 20.6" fill="none"><circle cx="8.2" cy="8.2" r="9.9" fill="#fff"/><path d="M9.1 0.6L16 7.4L14.9 9L10.75 9.8L9.9 13.9L8.3 14.7L2.5 9V7.4L7 6.5L7.9 1.2Z" fill="#8a8a8a" stroke="#8a8a8a" stroke-width="1.1" stroke-linejoin="round"/><path d="M4.7 12.2L0.9 16" stroke="#8a8a8a" stroke-width="1.6" stroke-linecap="round"/></svg>
<div class="t" style="left:1335.98px;top:181.68px;font-size:24px;color:#595959;letter-spacing:0.953px;-webkit-text-stroke:0.96px #595959;">All Tasks</div>
<svg class="b" style="left:1458.60px;top:179.60px;" width="26.50" height="26.50" viewBox="0 0 24 24" fill="none"><rect x="0.3" y="0.3" width="23.4" height="23.4" rx="5.2" fill="#3f9a8a"/><path d="M5 9.4H8.8V15H5ZM10.8 9.4H15.4V15H10.8ZM17.4 9.4H19.2V15H17.4Z" fill="#fff" stroke="#fff" stroke-width="1.2" stroke-linejoin="round"/></svg>
<svg class="b" style="left:1447.80px;top:168.00px;overflow:visible;" width="20.60" height="20.60" viewBox="-2 -2 20.6 20.6" fill="none"><circle cx="8.2" cy="8.2" r="9.9" fill="#fff"/><path d="M9.1 0.6L16 7.4L14.9 9L10.75 9.8L9.9 13.9L8.3 14.7L2.5 9V7.4L7 6.5L7.9 1.2Z" fill="#8a8a8a" stroke="#8a8a8a" stroke-width="1.1" stroke-linejoin="round"/><path d="M4.7 12.2L0.9 16" stroke="#8a8a8a" stroke-width="1.6" stroke-linecap="round"/></svg>
<div class="t" style="left:1495.42px;top:181.68px;font-size:24px;color:#595959;letter-spacing:1.383px;-webkit-text-stroke:0.96px #595959;">Workload</div>
<svg class="b" style="left:1626.60px;top:176.40px;" width="26.50" height="30.00" viewBox="0 0 24 27.2" fill="none"><path d="M7 3V6M17 3V6" stroke="#e8702e" stroke-width="5" stroke-linecap="round"/><rect x="0.3" y="3.3" width="23.4" height="23.4" rx="5.2" fill="#e8702e"/><path d="M7 3.6V6.2M17 3.6V6.2" stroke="#fff" stroke-width="1.5" stroke-linecap="round"/><text x="12" y="22.2" text-anchor="middle" font-family="Liberation Sans, sans-serif" font-weight="700" font-size="13.5" fill="#fff">31</text></svg>
<div class="t" style="left:1661.78px;top:181.68px;font-size:24px;color:#595959;letter-spacing:1.246px;-webkit-text-stroke:0.96px #595959;">Calendar</div>
<div class="b" style="left:1792.00px;top:177.00px;width:1.30px;height:31.00px;background:#e0e0e0;"></div>
<svg class="b" style="left:1819.05px;top:181.25px;" width="23.50" height="23.50" viewBox="0 0 23.5 23.5" fill="none"><path d="M11.75 2V21.5M2 11.75H21.5" stroke="#5a5a5a" stroke-width="2.5" stroke-linecap="round"/></svg>
<div class="t" style="left:1857.42px;top:181.68px;font-size:24px;color:#595959;letter-spacing:0.813px;-webkit-text-stroke:0.96px #595959;">View</div>
<svg class="b" style="left:679.80px;top:259.60px;" width="30.60" height="31.60" viewBox="0 0 24 24.5" fill="none"><g stroke="#585858" stroke-width="1.9" stroke-linecap="round" stroke-linejoin="round" fill="none"><path d="M5.6 2.6H18.4C20 2.6 21.2 3.8 21.2 5.4V12C21.2 17 17.4 20.2 12.8 22C12.3 22.2 11.7 22.2 11.2 22C6.6 20.2 2.8 17 2.8 12V5.4C2.8 3.8 4 2.6 5.6 2.6Z"/><path d="M8.2 11.8L11.2 14.6L16.6 8.8"/></g></svg>
<div class="t" style="left:718.50px;top:264.18px;font-size:24px;color:#585858;letter-spacing:1.152px;-webkit-text-stroke:0.45px #585858;">Protect view</div>
<svg class="b" style="left:1856.20px;top:260.30px;" width="30.40" height="30.40" viewBox="0 0 24 24" fill="none"><g stroke="#585858" stroke-width="2.1" stroke-linecap="round" stroke-linejoin="round" fill="none"><path d="M20.6 9.4C19.6 5.8 16.2 3.2 12.2 3.2C8.6 3.2 5.6 5.2 4.2 8.2"/><path d="M20.8 4.6V9.6H15.8"/><path d="M3.4 14.6C4.4 18.2 7.8 20.8 11.8 20.8C15.4 20.8 18.4 18.8 19.8 15.8"/><path d="M3.2 19.4V14.4H8.2"/></g></svg>
<div class="t" style="left:1895.81px;top:264.18px;font-size:24px;color:#585858;letter-spacing:0.782px;-webkit-text-stroke:0.45px #585858;">Refreshed: Sep 22</div>
<div class="b" style="left:2128.00px;top:251.60px;width:259.20px;height:47.80px;background:#efefff;border-radius:24px;border:1.8px solid #cbcbf6;box-sizing:border-box;"></div>
<svg class="b" style="left:2144.00px;top:262.00px;" width="28.00" height="28.00" viewBox="0 0 24 24" fill="none"><g stroke="#4a40d0" stroke-width="2.1" stroke-linecap="round" stroke-linejoin="round" fill="none"><circle cx="12" cy="12" r="9.6"/><path d="M12 6.4V12.2H8"/></g></svg>
<div class="t" style="left:2183.62px;top:264.18px;font-size:24px;color:#4a40d0;letter-spacing:0.901px;-webkit-text-stroke:0.45px #4a40d0;">Auto refresh: On</div>
<svg class="b" style="left:2403.50px;top:261.50px;" width="30.00" height="30.00" viewBox="0 0 24 24" fill="none"><g stroke="#585858" stroke-width="2.0" stroke-linecap="round" stroke-linejoin="round" fill="none"><path d="M21 10.4V6.2C21 4.4 19.6 3 17.8 3H6.2C4.4 3 3 4.4 3 6.2V17.8C3 19.6 4.4 21 6.2 21H12.6"/><path d="M7.8 13V16.4M11.6 10.6V16.4M15.4 8V11.2"/></g><path d="M19.6 10.8L13.8 18.2H18L17 23.6L23.4 15.8H19Z" fill="#f5b83f"/></svg>
<div class="t" style="left:2442.14px;top:264.18px;font-size:24px;color:#585858;letter-spacing:1.058px;-webkit-text-stroke:0.45px #585858;">Schedule report</div>
<svg class="b" style="left:2659.00px;top:263.00px;" width="29.00" height="25.00" viewBox="0 0 29 25" fill="none"><path d="M1.6 3.4H27.4M6.6 12.5H22.4M11.4 21.6H17.6" stroke="#585858" stroke-width="2.3" stroke-linecap="round"/></svg>
<div class="b" style="left:2713.20px;top:260.00px;width:1.30px;height:31.00px;background:#e2e2e2;"></div>
<div class="b" style="left:2731.80px;top:252.00px;width:46.40px;height:46.80px;background:#fff;border-radius:10.5px;border:1.7px solid #e4e4e4;box-sizing:border-box;"></div>
<svg class="b" style="left:2739.80px;top:260.20px;" width="30.50" height="30.50" viewBox="0 0 24 24" fill="none"><g stroke="#555" stroke-width="2.0" stroke-linecap="round" stroke-linejoin="round" fill="none"><circle cx="12" cy="12" r="3.3"/><path d="M10.3 2.6H13.7L14.3 5.3C15 5.5 15.7 5.9 16.3 6.4L18.9 5.5L20.6 8.5L18.6 10.3C18.7 11 18.7 13 18.6 13.7L20.6 15.5L18.9 18.5L16.3 17.6C15.7 18.1 15 18.5 14.3 18.7L13.7 21.4H10.3L9.7 18.7C9 18.5 8.3 18.1 7.7 17.6L5.1 18.5L3.4 15.5L5.4 13.7C5.3 13 5.3 11 5.4 10.3L3.4 8.5L5.1 5.5L7.7 6.4C8.3 5.9 9 5.5 9.7 5.3Z"/></g></svg>
<div class="b" style="left:2787.30px;top:251.50px;width:118.70px;height:47.80px;background:#5b49dd;border-radius:11px;"></div>
<svg class="b" style="left:2802.50px;top:263.00px;" width="25.00" height="25.00" viewBox="0 0 25 25" fill="none"><path d="M12.5 2V23M2 12.5H23" stroke="#fff" stroke-width="2.5" stroke-linecap="round"/></svg>
<div class="t" style="left:2839.05px;top:264.38px;font-size:24px;color:#fff;letter-spacing:1.060px;-webkit-text-stroke:0.5px #fff;">Card</div>
<div class="b" style="left:641px;top:323px;width:2281px;height:1425px;overflow:hidden;">
<div class="b" style="left:23.20px;top:-123.00px;width:2243.00px;height:182.30px;background:#fff;border-radius:20px;border:1.3px solid #e7e7e7;box-sizing:border-box;box-shadow:0 1px 3px rgba(0,0,0,.05);"></div>
<div class="b" style="left:23.20px;top:89.00px;width:2243.00px;height:605.00px;background:#fff;border-radius:20px;border:1.3px solid #e7e7e7;box-sizing:border-box;box-shadow:0 1px 3px rgba(0,0,0,.05);"></div>
<div class="b" style="left:23.20px;top:724.00px;width:1106.80px;height:606.20px;background:#fff;border-radius:20px;border:1.3px solid #e7e7e7;box-sizing:border-box;box-shadow:0 1px 3px rgba(0,0,0,.05);"></div>
<div class="b" style="left:1159.40px;top:724.00px;width:1106.80px;height:606.20px;background:#fff;border-radius:20px;border:1.3px solid #e7e7e7;box-sizing:border-box;box-shadow:0 1px 3px rgba(0,0,0,.05);"></div>
<div class="b" style="left:23.20px;top:1359.50px;width:1106.80px;height:400.00px;background:#fff;border-radius:20px;border:1.3px solid #e7e7e7;box-sizing:border-box;box-shadow:0 1px 3px rgba(0,0,0,.05);"></div>
<div class="b" style="left:1159.40px;top:1359.50px;width:1106.80px;height:400.00px;background:#fff;border-radius:20px;border:1.3px solid #e7e7e7;box-sizing:border-box;box-shadow:0 1px 3px rgba(0,0,0,.05);"></div>
</div>
<div class="t" style="left:1003.83px;top:325.68px;font-size:24px;color:#6b6b6b;letter-spacing:0.936px;-webkit-text-stroke:0.3px #6b6b6b;">Murray Armstrong</div>
<div class="t" style="left:1741.23px;top:325.68px;font-size:24px;color:#6b6b6b;letter-spacing:0.489px;-webkit-text-stroke:0.3px #6b6b6b;">Dummy User</div>
<div class="t" style="left:2445.63px;top:325.68px;font-size:24px;color:#6b6b6b;letter-spacing:0.692px;-webkit-text-stroke:0.3px #6b6b6b;">Development</div>
<div class="t" style="left:698.88px;top:446.61px;font-size:32px;color:#202020;letter-spacing:1.033px;-webkit-text-stroke:1.28px #202020;">Department Sprint Points, By Sprint</div>
<div class="t" style="left:696.97px;top:492.98px;font-size:24px;color:#666;letter-spacing:0.890px;-webkit-text-stroke:0.3px #666;">Sprint points</div>
<svg class="b" style="left:0.00px;top:0.00px;" width="2936.00" height="1000.00" viewBox="0 0 2936 1000" fill="none"><path d="M733 552.3H2875.5" stroke="#f1f1f1" stroke-width="2"/><path d="M733 678.1H2875.5" stroke="#f1f1f1" stroke-width="2"/><path d="M733 803.7H2875.5" stroke="#f1f1f1" stroke-width="2"/><path d="M733 927.2H2875.5" stroke="#f1f1f1" stroke-width="2"/><path d="M751.8 551.8V946" stroke="#f1f1f1" stroke-width="2"/><path d="M1282.8 551.8V946" stroke="#f1f1f1" stroke-width="2"/><path d="M1812.8 551.8V946" stroke="#f1f1f1" stroke-width="2"/><path d="M2343.8 551.8V946" stroke="#f1f1f1" stroke-width="2"/><path d="M2874.8 551.8V946" stroke="#f1f1f1" stroke-width="2"/><path d="M890.2 926.5V859.6Q890.2 854.2 895.6 854.2H1139.4Q1144.8 854.2 1144.8 859.6V926.5Z" fill="#4a80b4"/><path d="M1950.8 926.5V683.6Q1950.8 678.2 1956.2 678.2H2199.9Q2205.3 678.2 2205.3 683.6V926.5Z" fill="#e234e2"/></svg>
<div class="t" style="left:696.20px;top:543.68px;font-size:23.3px;color:#6b6b6b;letter-spacing:0.716px;-webkit-text-stroke:0.3px #6b6b6b;">15</div>
<div class="t" style="left:696.20px;top:669.48px;font-size:23.3px;color:#6b6b6b;letter-spacing:0.658px;-webkit-text-stroke:0.3px #6b6b6b;">10</div>
<div class="t" style="left:709.85px;top:795.08px;font-size:23.3px;color:#6b6b6b;-webkit-text-stroke:0.3px #6b6b6b;">5</div>
<div class="t" style="left:709.79px;top:918.58px;font-size:23.3px;color:#6b6b6b;-webkit-text-stroke:0.3px #6b6b6b;">0</div>
<div class="t" style="left:1012.38px;top:809.76px;font-size:23.2px;color:#000;font-weight:700;">3</div>
<div class="t" style="left:2066.66px;top:645.93px;font-size:23px;color:#000;font-weight:700;letter-spacing:0.170px;">10</div>
<div class="t" style="left:938.89px;top:960.88px;font-size:23.3px;color:#6b6b6b;letter-spacing:1.394px;-webkit-text-stroke:0.3px #6b6b6b;">Department 1</div>
<div class="t" style="left:1469.39px;top:960.88px;font-size:23.3px;color:#6b6b6b;letter-spacing:1.394px;-webkit-text-stroke:0.3px #6b6b6b;">Department 2</div>
<div class="t" style="left:2000.19px;top:960.88px;font-size:23.3px;color:#6b6b6b;letter-spacing:1.383px;-webkit-text-stroke:0.3px #6b6b6b;">Department 3</div>
<div class="t" style="left:2530.19px;top:960.88px;font-size:23.3px;color:#6b6b6b;letter-spacing:1.351px;-webkit-text-stroke:0.3px #6b6b6b;">Department 4</div>
<div class="t" style="left:699.64px;top:1081.21px;font-size:32px;color:#202020;letter-spacing:0.904px;-webkit-text-stroke:1.28px #202020;">Cycle Time</div>
<svg class="b" style="left:0.00px;top:1100.00px;" width="2936.00" height="500.00" viewBox="0 1100 2936 500" fill="none"><path d="M791 1147.2H1737.5" stroke="#f1f1f1" stroke-width="2"/><path d="M791 1253H1737.5" stroke="#f1f1f1" stroke-width="2"/><path d="M791 1356.6H1737.5" stroke="#f1f1f1" stroke-width="2"/><path d="M791 1458.7H1737.5" stroke="#f1f1f1" stroke-width="2"/><path d="M791 1562.3H1737.5" stroke="#f1f1f1" stroke-width="2"/><path d="M869.6 1147V1581.6" stroke="#f1f1f1" stroke-width="2"/><path d="M1079.2 1147V1581.6" stroke="#f1f1f1" stroke-width="2"/><path d="M1287 1147V1581.6" stroke="#f1f1f1" stroke-width="2"/><path d="M1496.8 1147V1581.6" stroke="#f1f1f1" stroke-width="2"/><path d="M1707 1147V1581.6" stroke="#f1f1f1" stroke-width="2"/><path d="M810.8 1396.2L839.0 1396.2L868.9 1218.3L898.8 1218.3L928.7 1218.3L958.6 1218.3L988.5 1218.3L1018.4 1384.2L1048.3 1384.2L1078.2 1384.2L1108.2 1562.0L1138.1 1562.0L1168.0 1562.0L1197.9 1562.0L1227.8 1562.0L1257.7 1562.0L1287.6 1562.0L1317.5 1562.0L1347.4 1562.0L1377.3 1562.0L1407.2 1562.0L1437.1 1562.0L1467.0 1562.0L1496.9 1562.0L1526.9 1562.0L1556.8 1562.0L1586.7 1562.0L1616.6 1562.0L1646.5 1562.0L1676.4 1562.0L1706.3 1562.0" stroke="#ee5f5c" stroke-width="3.6" stroke-linejoin="round" fill="none"/><circle cx="810.8" cy="1396.2" r="8" fill="#ee5f5c"/><circle cx="839.0" cy="1396.2" r="8" fill="#ee5f5c"/><circle cx="868.9" cy="1218.3" r="8" fill="#ee5f5c"/><circle cx="898.8" cy="1218.3" r="8" fill="#ee5f5c"/><circle cx="928.7" cy="1218.3" r="8" fill="#ee5f5c"/><circle cx="958.6" cy="1218.3" r="8" fill="#ee5f5c"/><circle cx="988.5" cy="1218.3" r="8" fill="#ee5f5c"/><circle cx="1018.4" cy="1384.2" r="8" fill="#ee5f5c"/><circle cx="1048.3" cy="1384.2" r="8" fill="#ee5f5c"/><circle cx="1078.2" cy="1384.2" r="8" fill="#ee5f5c"/><circle cx="1108.2" cy="1562.0" r="8" fill="#ee5f5c"/><circle cx="1138.1" cy="1562.0" r="8" fill="#ee5f5c"/><circle cx="1168.0" cy="1562.0" r="8" fill="#ee5f5c"/><circle cx="1197.9" cy="1562.0" r="8" fill="#ee5f5c"/><circle cx="1227.8" cy="1562.0" r="8" fill="#ee5f5c"/><circle cx="1257.7" cy="1562.0" r="8" fill="#ee5f5c"/><circle cx="1287.6" cy="1562.0" r="8" fill="#ee5f5c"/><circle cx="1317.5" cy="1562.0" r="8" fill="#ee5f5c"/><circle cx="1347.4" cy="1562.0" r="8" fill="#ee5f5c"/><circle cx="1377.3" cy="1562.0" r="8" fill="#ee5f5c"/><circle cx="1407.2" cy="1562.0" r="8" fill="#ee5f5c"/><circle cx="1437.1" cy="1562.0" r="8" fill="#ee5f5c"/><circle cx="1467.0" cy="1562.0" r="8" fill="#ee5f5c"/><circle cx="1496.9" cy="1562.0" r="8" fill="#ee5f5c"/><circle cx="1526.9" cy="1562.0" r="8" fill="#ee5f5c"/><circle cx="1556.8" cy="1562.0" r="8" fill="#ee5f5c"/><circle cx="1586.7" cy="1562.0" r="8" fill="#ee5f5c"/><circle cx="1616.6" cy="1562.0" r="8" fill="#ee5f5c"/><circle cx="1646.5" cy="1562.0" r="8" fill="#ee5f5c"/><circle cx="1676.4" cy="1562.0" r="8" fill="#ee5f5c"/><circle cx="1706.3" cy="1562.0" r="8" fill="#ee5f5c"/></svg>
<div class="t" style="left:696.70px;top:1138.78px;font-size:23.3px;color:#6b6b6b;letter-spacing:0.354px;-webkit-text-stroke:0.3px #6b6b6b;">11d 13h</div>
<div class="t" style="left:704.16px;top:1243.28px;font-size:23.3px;color:#6b6b6b;letter-spacing:1.181px;-webkit-text-stroke:0.3px #6b6b6b;">8d 16h</div>
<div class="t" style="left:704.22px;top:1347.08px;font-size:23.3px;color:#6b6b6b;letter-spacing:1.170px;-webkit-text-stroke:0.3px #6b6b6b;">5d 18h</div>
<div class="t" style="left:705.49px;top:1449.18px;font-size:23.3px;color:#6b6b6b;letter-spacing:0.916px;-webkit-text-stroke:0.3px #6b6b6b;">2d 21h</div>
<div class="t" style="left:767.79px;top:1552.78px;font-size:23.3px;color:#6b6b6b;-webkit-text-stroke:0.3px #6b6b6b;">0</div>
<div class="t" style="left:831.90px;top:1596.68px;font-size:23.3px;color:#6b6b6b;letter-spacing:0.906px;-webkit-text-stroke:0.3px #6b6b6b;">Aug 25</div>
<div class="t" style="left:1049.25px;top:1596.68px;font-size:23.3px;color:#6b6b6b;letter-spacing:0.321px;-webkit-text-stroke:0.3px #6b6b6b;">Sep 1</div>
<div class="t" style="left:1256.10px;top:1596.68px;font-size:23.3px;color:#6b6b6b;letter-spacing:1.202px;-webkit-text-stroke:0.3px #6b6b6b;">Sep 8</div>
<div class="t" style="left:1459.85px;top:1596.68px;font-size:23.3px;color:#6b6b6b;letter-spacing:0.476px;-webkit-text-stroke:0.3px #6b6b6b;">Sep 15</div>
<div class="t" style="left:1660.30px;top:1596.68px;font-size:23.3px;color:#6b6b6b;letter-spacing:1.011px;-webkit-text-stroke:0.3px #6b6b6b;">Sep 22</div>
<div class="t" style="left:1837.00px;top:1081.21px;font-size:32px;color:#202020;letter-spacing:0.894px;-webkit-text-stroke:1.28px #202020;">Task Completion, By Sprint</div>
<svg class="b" style="left:2150.00px;top:1150.00px;" width="420.00" height="380.00" viewBox="2150 1150 420 380" fill="none"><path d="M2360.80 1184.65A155.5 155.5 0 0 1 2499.65 1285.53L2434.77 1306.61A87.4 87.4 0 0 0 2360.79 1252.86Z" fill="#4a80b4" stroke="#4a80b4" stroke-width="12" stroke-linejoin="round"/><path d="M2503.85 1298.46A155.5 155.5 0 1 1 2347.20 1184.65L2347.21 1252.86A87.4 87.4 0 1 0 2438.97 1319.53Z" fill="#e234e2" stroke="#e234e2" stroke-width="12" stroke-linejoin="round"/></svg>
<div class="t" style="left:2399.38px;top:1231.88px;font-size:24px;color:#fff;letter-spacing:1.715px;-webkit-text-stroke:0.15px #fff;">20%</div>
<div class="t" style="left:2257.45px;top:1428.08px;font-size:24px;color:#fff;letter-spacing:1.825px;-webkit-text-stroke:0.15px #fff;">80%</div>
<div class="t" style="left:2331.80px;top:1283.28px;font-size:80px;color:#222;">5</div>
<div class="t" style="left:2327.47px;top:1366.88px;font-size:24px;color:#999;letter-spacing:0.960px;-webkit-text-stroke:0.3px #999;">Total</div>
<div class="b" style="left:2215.00px;top:1575.60px;width:20.40px;height:20.40px;background:#4a80b4;border-radius:4px;"></div>
<div class="t" style="left:2248.83px;top:1572.19px;font-size:26px;color:#333;letter-spacing:0.719px;">Sprint 2</div>
<div class="b" style="left:2372.80px;top:1575.60px;width:20.40px;height:20.40px;background:#e234e2;border-radius:4px;"></div>
<div class="t" style="left:2406.83px;top:1572.19px;font-size:26px;color:#333;letter-spacing:0.319px;">Sprint 1</div>
<div class="b" style="left:641px;top:1684px;width:2281px;height:64px;overflow:hidden;">
<div class="t" style="left:59.80px;top:31.61px;font-size:32px;color:#202020;letter-spacing:0.825px;-webkit-text-stroke:1.28px #202020;">Time Estimated, By Sprint</div>
<div class="t" style="left:1196.00px;top:31.61px;font-size:32px;color:#202020;letter-spacing:0.831px;-webkit-text-stroke:1.28px #202020;">Time Tracked, By Sprint</div>
</div>
</div>
<script>(function(){var w=window.innerWidth||2936,s=w/2936;if(Math.abs(s-1)>0.002){var a=document.getElementById("app");a.style.transformOrigin="0 0";a.style.transform="scale("+s+")";document.body.style.width=w+"px";document.body.style.height=(1835*s)+"px";}})();</script>
</body></html>
